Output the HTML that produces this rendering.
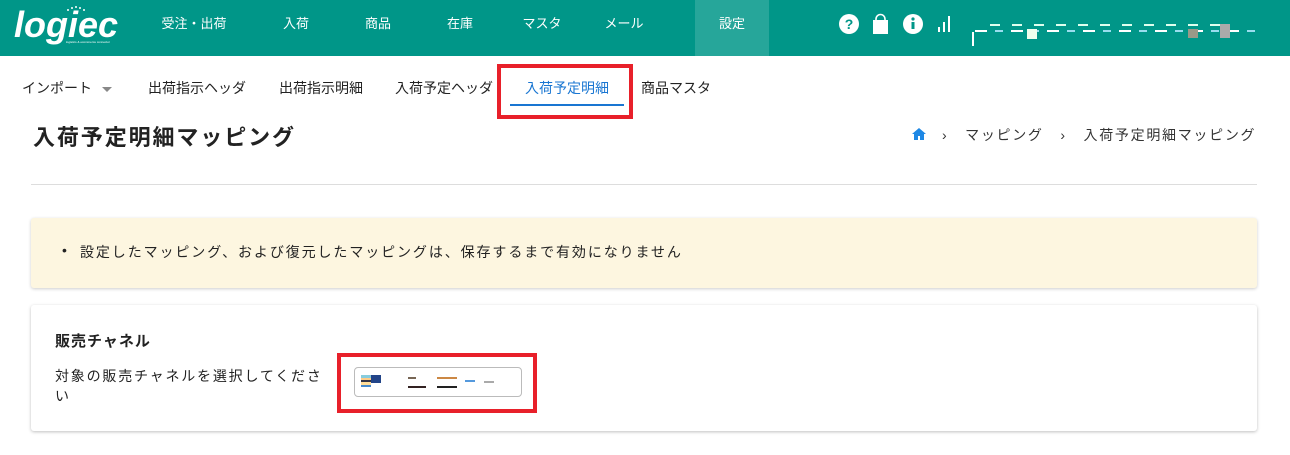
<!DOCTYPE html>
<html><head><meta charset="utf-8"><style>
*{box-sizing:border-box;margin:0;padding:0}
body{width:1290px;height:455px;background:#fff;font-family:"Liberation Sans","Noto Sans CJK JP",sans-serif;color:#222;position:relative;overflow:hidden}
.hdr{position:absolute;left:0;top:0;width:1290px;height:56px;background:#009688}
.logo{position:absolute;left:14px;top:4px;color:#fff;font-weight:bold;font-style:italic;font-size:36px;letter-spacing:0px}
.nav a{position:absolute;top:0;height:56px;line-height:48px;color:#fff;font-size:13px;text-align:center;width:74px}
.sub{position:absolute;top:74px;font-size:14px;color:#222}
.abs{position:absolute}
.bar{position:absolute;height:2px}
</style></head><body>
<div class="hdr">
<div class="logo">logiec</div>
<svg class="abs" style="left:66px;top:5px" width="20" height="6"><g fill="#fff"><circle cx="2" cy="5" r="1"/><circle cx="6" cy="3" r="1"/><circle cx="10" cy="2" r="1"/><circle cx="14" cy="3" r="1"/><circle cx="18" cy="5" r="1"/></g></svg>
<div style="position:absolute;left:66px;top:40px;font-size:3px;color:#fff">logistics &amp; ecommerce connector</div>
<div class="nav">
<a style="left:157px">受注・出荷</a>
<a style="left:259px">入荷</a>
<a style="left:341px">商品</a>
<a style="left:423px">在庫</a>
<a style="left:505px">マスタ</a>
<a style="left:587px">メール</a>
<a style="left:695px;background:#26a69a">設定</a>
</div>
<svg class="abs" style="left:838px;top:13px" width="120" height="22">
<circle cx="11" cy="11" r="10" fill="#fff"/><text x="11" y="16" font-size="14" font-weight="bold" fill="#009688" text-anchor="middle" font-family="Liberation Sans">?</text>
<path d="M35 7h15v14h-15z" fill="#fff"/><path d="M38 8v-2a4.5 4.5 0 0 1 9 0v2" stroke="#fff" stroke-width="1.6" fill="none"/>
<circle cx="75" cy="11" r="10" fill="#fff"/><rect x="73.5" y="9" width="3" height="7" fill="#009688"/><circle cx="75" cy="6" r="1.6" fill="#009688"/>
<rect x="100" y="14" width="2" height="5" fill="#fff"/><rect x="105" y="9" width="2" height="10" fill="#fff"/><rect x="110" y="3" width="2" height="16" fill="#fff"/>
</svg>
<div class="abs" style="left:972px;top:32px;width:2px;height:14px;background:#fff"></div>
<div class="bar" style="left:975px;top:30px;width:280px;background:repeating-linear-gradient(90deg,#fff 0 12px,transparent 12px 20px,#9de 20px 28px,transparent 28px 36px)"></div>
<div class="bar" style="left:990px;top:24px;width:230px;background:repeating-linear-gradient(90deg,#dfe 0 10px,transparent 10px 22px)"></div>
<div class="abs" style="left:1027px;top:29px;width:10px;height:10px;background:#efe"></div>
<div class="abs" style="left:1188px;top:29px;width:10px;height:9px;background:#998"></div>
<div class="abs" style="left:1220px;top:24px;width:10px;height:14px;background:#aaa"></div>
</div>
<div class="sub" style="left:22px;top:78px">インポート <span style="display:inline-block;border:5px solid transparent;border-top-color:#888;vertical-align:-4px;margin-left:6px"></span></div>
<div class="sub" style="left:148px;top:78px">出荷指示ヘッダ</div>
<div class="sub" style="left:279px;top:78px">出荷指示明細</div>
<div class="sub" style="left:395px;top:78px">入荷予定ヘッダ</div>
<div class="sub" style="left:525px;top:78px;color:#1976d2">入荷予定明細</div>
<div class="abs" style="left:510px;top:104px;width:114px;height:2px;background:#1976d2"></div>
<div class="abs" style="left:497px;top:64px;width:136px;height:55px;border:4px solid #e8202a"></div>
<div class="sub" style="left:641px;top:78px">商品マスタ</div>
<div class="abs" style="left:33px;top:120px;font-size:22px;font-weight:bold;letter-spacing:1.9px">入荷予定明細マッピング</div>
<svg class="abs" style="left:910px;top:126px" width="18" height="16"><path d="M2 8L9 2l7 6h-2v6h-4v-4h-2v4H4V8z" fill="#1e88e5"/></svg>
<div class="abs" style="left:942px;top:125px;font-size:14px;color:#333;letter-spacing:1.7px;white-space:nowrap">›&nbsp;&nbsp;&nbsp;マッピング&nbsp;&nbsp;&nbsp;›&nbsp;&nbsp;&nbsp;入荷予定明細マッピング</div>
<div class="abs" style="left:31px;top:184px;width:1226px;height:1px;background:#ddd"></div>
<div class="abs" style="left:31px;top:218px;width:1226px;height:70px;background:#fdf6e0;box-shadow:0 1px 3px rgba(0,0,0,.2);border-radius:3px"></div>
<div class="abs" style="left:62px;top:242px;font-size:14px">•</div>
<div class="abs" style="left:80px;top:242px;font-size:14px;letter-spacing:1.9px;white-space:nowrap">設定したマッピング、および復元したマッピングは、保存するまで有効になりません</div>
<div class="abs" style="left:31px;top:305px;width:1226px;height:126px;background:#fff;box-shadow:0 1px 3px rgba(0,0,0,.25);border-radius:3px"></div>
<div class="abs" style="left:55px;top:330px;font-size:15px;font-weight:bold;letter-spacing:1px">販売チャネル</div>
<div class="abs" style="left:55px;top:366px;font-size:14px;width:275px;line-height:20px;letter-spacing:1.8px">対象の販売チャネルを選択してください</div>
<div class="abs" style="left:337px;top:353px;width:200px;height:60px;border:4px solid #e8202a"></div>
<div class="abs" style="left:354px;top:367px;width:168px;height:30px;border:1px solid #bbb;border-radius:4px"></div>
<div class="abs" style="left:361px;top:375px;width:10px;height:12px;background:linear-gradient(#8cd 0 3px,#fc8 3px 5px,#334 5px 7px,#fd9 7px 10px,#48c 10px)"></div>
<div class="abs" style="left:371px;top:375px;width:10px;height:8px;background:#248"></div>
<div class="bar" style="left:408px;top:377px;width:8px;background:#765"></div>
<div class="bar" style="left:408px;top:386px;width:18px;background:#322"></div>
<div class="bar" style="left:437px;top:377px;width:20px;background:#c84"></div>
<div class="bar" style="left:437px;top:386px;width:20px;background:#222"></div>
<div class="bar" style="left:465px;top:380px;width:10px;background:#59d"></div>
<div class="bar" style="left:484px;top:381px;width:10px;background:#aaa"></div>
</body></html>
